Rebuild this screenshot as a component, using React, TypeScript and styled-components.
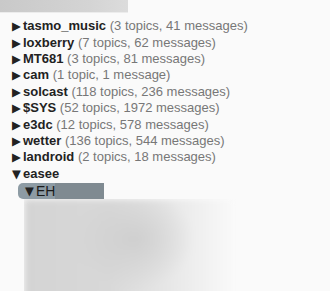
import React from "react";
import styled, { createGlobalStyle } from "styled-components";

const Global = createGlobalStyle`
  html, body { margin: 0; padding: 0; background: #fafafa; }
  body { font-family: "Liberation Sans", Arial, sans-serif; }
`;

const Page = styled.div`
  width: 330px;
  height: 291px;
  overflow: hidden;
  background: #fafafa;
`;

const TopBar = styled.div`
  width: 128px;
  height: 12px;
  background: linear-gradient(90deg, #c9c9c9 0%, #d4d4d4 70%, #dcdcdc 100%);
  border-bottom: 1px solid #ececec;
`;

const Tree = styled.div`
  padding: 5px 0 0 12px;
  font-size: 13px;
  color: #777;
`;

const Row = styled.div`
  display: flex;
  align-items: center;
  height: 16.4px;
  line-height: 16px;
  white-space: pre;
`;

const Toggle = styled.span`
  display: inline-block;
  width: 11px;
  font-family: "DejaVu Sans", sans-serif;
  font-size: 11.5px;
  line-height: 12px;
  color: #222;
`;

const Name = styled.span`
  font-weight: bold;
  color: #222;
`;

const Children = styled.div`
  padding-left: 6px;
`;

const Selected = styled.div`
  display: inline-flex;
  align-items: center;
  height: 16px;
  margin-top: 1px;
  border-radius: 5px 0 0 5px;
  background: #8d9ba4;
  color: #1a1a1a;
  padding-left: 7px;
  font-size: 14px;
  line-height: 16px;
`;

const Redacted = styled.span`
  display: inline-block;
  width: 49px;
  height: 16px;
  background: #7f8a91;
`;

const BlurWrap = styled.div`
  margin-left: 6px;
  width: 212px;
  height: 100px;
  overflow: hidden;
`;

const Blur = styled.div`
  width: 100%;
  height: 100%;
  background:
    radial-gradient(ellipse 60px 50px at 110px 40px, #cfcfcf 0%, rgba(207,207,207,0) 100%),
    linear-gradient(90deg, #d4d4d4 0%, #d8d8d8 40%, #e8e8e8 70%, #fafafa 100%);
  filter: blur(3px);
`;

const items: [string, string][] = [
  ["tasmo_music", "(3 topics, 41 messages)"],
  ["loxberry", "(7 topics, 62 messages)"],
  ["MT681", "(3 topics, 81 messages)"],
  ["cam", "(1 topic, 1 message)"],
  ["solcast", "(118 topics, 236 messages)"],
  ["$SYS", "(52 topics, 1972 messages)"],
  ["e3dc", "(12 topics, 578 messages)"],
  ["wetter", "(136 topics, 544 messages)"],
  ["landroid", "(2 topics, 18 messages)"],
];

export default function App() {
  return (
    <Page>
      <Global />
      <TopBar />
      <Tree>
        {items.map(([n, c]) => (
          <Row key={n}>
            <Toggle>▶</Toggle>
            <Name>{n}</Name>
            {" " + c}
          </Row>
        ))}
        <Row>
          <Toggle>▼</Toggle>
          <Name>easee</Name>
        </Row>
        <Children>
          <Selected>
            <Toggle>▼</Toggle>EH<Redacted />
          </Selected>
          <BlurWrap>
            <Blur />
          </BlurWrap>
        </Children>
      </Tree>
    </Page>
  );
}
